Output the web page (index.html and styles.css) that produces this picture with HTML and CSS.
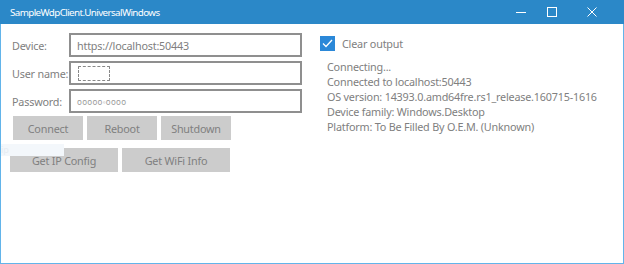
FILE: index.html
```html
<!DOCTYPE html>
<html>
<head>
<meta charset="utf-8">
<link rel="stylesheet" href="styles.css">
</head>
<body>
<div class="window">
  <div class="titlebar">
    <span class="title">SampleWdpClient.UniversalWindows</span>
    <div class="controls">
      <svg class="ctl" width="46" height="24" viewBox="0 0 46 24"><line x1="18" y1="12.5" x2="28" y2="12.5" stroke="#fff" stroke-width="1"/></svg>
      <svg class="ctl" width="30" height="24" viewBox="0 0 30 24"><rect x="3.5" y="7.5" width="9" height="9" fill="none" stroke="#fff" stroke-width="1"/></svg>
      <svg class="ctl" width="46" height="24" viewBox="0 0 46 24"><path d="M13.5 7.5 L22.5 16.5 M22.5 7.5 L13.5 16.5" stroke="#fff" stroke-width="1"/></svg>
    </div>
  </div>
  <div class="client">
    <div class="left">
      <div class="form">
        <span class="label">Device:</span>
        <div class="box"><span class="val">https://localhost:50443</span></div>
        <span class="label">User name:</span>
        <div class="box"><span class="redact"></span></div>
        <span class="label">Password:</span>
        <div class="box"><span class="dots">ooooo◦oooo</span></div>
      </div>
      <div class="btnrow row1">
        <div class="btn">Connect</div>
        <div class="btn">Reboot</div>
        <div class="btn">Shutdown</div>
      </div>
      <div class="btnrow row2">
        <div class="btn wide">Get IP Config</div>
        <div class="btn wide">Get WiFi Info</div>
      </div>
      <div class="ghost">ip</div>
    </div>
    <div class="right">
      <div class="check">
        <svg width="15" height="15" viewBox="0 0 15 15"><rect width="15" height="15" fill="#2b88d8"/><path d="M3 7.5 L6 10.5 L12 4" fill="none" stroke="#fff" stroke-width="1.3"/></svg>
        <span>Clear output</span>
      </div>
      <div class="output">
        <div>Connecting...</div>
        <div>Connected to localhost:50443</div>
        <div>OS version: 14393.0.amd64fre.rs1_release.160715-1616</div>
        <div>Device family: Windows.Desktop</div>
        <div>Platform: To Be Filled By O.E.M. (Unknown)</div>
      </div>
    </div>
  </div>
</div>
</body>
</html>
```
FILE: styles.css
```css
html, body { margin: 0; padding: 0; background: #fff; }
body { font-family: "Noto Sans", "Open Sans", sans-serif; }
.window { width: 624px; height: 264px; display: flex; flex-direction: column; box-sizing: border-box; }
.titlebar { height: 24px; background: #2b88c8; display: flex; align-items: center; justify-content: space-between; flex: none; }
.title { color: #fff; font-size: 9.8px; padding-left: 10px; letter-spacing: -0.6px; }
.controls { display: flex; height: 24px; }
.ctl { display: block; }
.controls .ctl:last-child { margin-right: 4px; }
.client { flex: 1; border: 1px solid #62b4ea; border-top: none; display: flex; position: relative; }
.left { width: 300px; padding-top: 9px; flex: none; }
.form { display: grid; grid-template-columns: 57px 233px; row-gap: 4px; margin-left: 11px; }
.label { font-size: 10.8px; color: #808080; display: flex; align-items: center; letter-spacing: -0.2px; white-space: nowrap; }
.box { height: 24px; border: 2px solid #8f8f8f; box-sizing: border-box; display: flex; align-items: center; padding-left: 6px; background: #fff; }
.val { font-size: 10.8px; color: #808080; letter-spacing: -0.2px; }
.redact { width: 30px; height: 13px; border: 1px dashed #888; border-radius: 1px; margin-left: 1px; }
.dots { font-size: 8px; color: #9a9a9a; letter-spacing: 0.3px; }
.btnrow { display: flex; gap: 4px; }
.row1 { margin-top: 3px; margin-left: 12px; }
.row2 { margin-top: 8px; margin-left: 9px; }
.btn { height: 24px; width: 70px; background: #cccccc; color: #808080; font-size: 10.8px; display: flex; align-items: center; justify-content: center; letter-spacing: -0.2px; }
.btn.wide { width: 108px; }
.ghost { position: absolute; left: 0; top: 120px; width: 63px; height: 12px; background: #f3f7fb; color: #e6ecf2; font-size: 9px; line-height: 12px; }
.right { padding-top: 12px; margin-left: 19px; }
.check { display: flex; align-items: center; gap: 7px; font-size: 10.8px; color: #808080; letter-spacing: -0.2px; }
.check svg { display: block; }
.output { margin-top: 8px; margin-left: 7px; font-size: 10.8px; color: #808080; line-height: 15px; letter-spacing: -0.2px; }
```
